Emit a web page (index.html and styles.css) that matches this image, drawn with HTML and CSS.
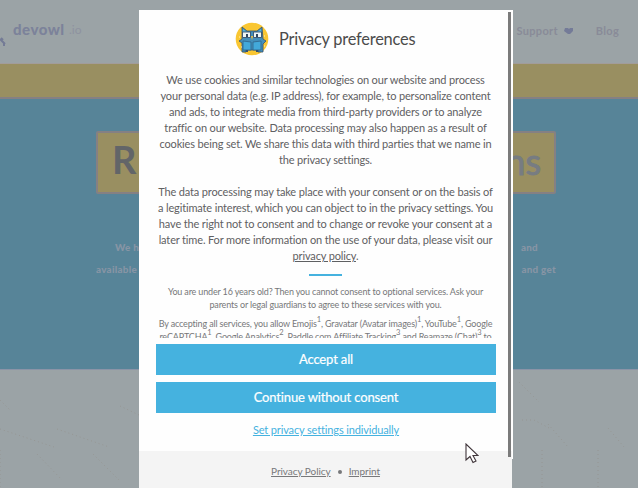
FILE: index.html
```html
<!DOCTYPE html>
<html lang="en">
<head>
<meta charset="utf-8">
<title>Privacy preferences</title>
<link rel="stylesheet" href="styles.css">
</head>
<body>
<div class="site">
  <header class="site-header">
    <div class="brand"><svg class="brand-mark" viewBox="0 0 6 10"><path d="M0 2L5 7M1 1l2 2M4 6v3" /></svg><b>devowl</b><span>.io</span></div>
    <nav class="site-nav"><span>Support</span><svg class="caret" viewBox="0 0 10 6"><path d="M1 0h3l1 1 1-1h3v3L6 6H4L0 3z"/></svg><span>Blog</span></nav>
  </header>
  <div class="notice"></div>
  <section class="hero">
    <div class="hero-title"><span>R</span><span class="hero-end">ns</span></div>
    <div class="hero-line first"><span>We h</span><span>and</span></div>
    <div class="hero-line"><span>available</span><span>and get</span></div>
  </section>
  <section class="below">
    <svg class="traces" viewBox="0 0 638 118"><path d="M0 30l11 11M0 59l54 18M37 84l25 26M57 59l52 18M93 84l26 26M120 36l19 9M519 12l20 20M548 54l20 23M608 58l16 19M522 50h12l15 8M542 80v38M598 80v38M0 80v38" /></svg>
  </section>
</div>

<div class="dialog">
  <div class="dialog-head">
    <svg class="logo" viewBox="0 0 34 34">
      <circle cx="17" cy="17" r="16.3" fill="#f9c632"/>
      <path d="M7 5l5 4h10l5-4 1 12 3 2-3 3v8h-5v-2H11v2H7v-9l-3-2 3-2z" fill="#438fba" stroke="#35516d" stroke-width=".8"/>
      <path d="M8 7l5 4-5 1zM26 7l-5 4 5 1z" fill="#55b6df"/>
      <path d="M7.5 10h8v5.5h-8zM18.5 10h8v5.5h-8z" fill="#edf5f6" stroke="#35516d" stroke-width=".9"/>
      <path d="M11 12h2v3h-2zM21 12h2v3h-2z" fill="#304862"/>
      <path d="M16 14h2l-1 4z" fill="#f6c23a"/>
      <path d="M8 19l8 1v8H8zM18 20l8-1v9h-8z" fill="#43a9da" stroke="#31698f" stroke-width=".9"/>
      <path d="M12 28v2M22 28v2" stroke="#35516d" stroke-width="2"/>
      <path d="M4 15h1M29 14h1M29 24h1M6 25h1" stroke="#fff3c4"/>
    </svg>
    <h1>Privacy preferences</h1>
  </div>
  <div class="content">
    <p>We use cookies and similar technologies on our website and process<br>your personal data (e.g. IP address), for example, to personalize content<br>and ads, to integrate media from third-party providers or to analyze<br>traffic on our website. Data processing may also happen as a result of<br>cookies being set. We share this data with third parties that we name in<br>the privacy settings.</p>
    <p>The data processing may take place with your consent or on the basis of<br>a legitimate interest, which you can object to in the privacy settings. You<br>have the right not to consent and to change or revoke your consent at a<br>later time. For more information on the use of your data, please visit our<br><a>privacy policy</a>.</p>
    <div class="rule"></div>
    <div class="small">You are under 16 years old? Then you cannot consent to optional services. Ask your<br>parents or legal guardians to agree to these services with you.</div>
    <div class="small services">By accepting all services, you allow Emojis<sup>1</sup>, Gravatar (Avatar images)<sup>1</sup>, YouTube<sup>1</sup>, Google<br>reCAPTCHA<sup>1</sup>, Google Analytics<sup>2</sup>, Paddle.com Affiliate Tracking<sup>3</sup> and Reamaze (Chat)<sup>3</sup> to</div>
  </div>
  <div class="actions">
    <div class="button">Accept all</div>
    <div class="button">Continue without consent</div>
    <a class="individual">Set privacy settings individually</a>
  </div>
  <footer class="dialog-foot"><a>Privacy Policy</a><i></i><a>Imprint</a></footer>
  <div class="scroll-track"><div class="scroll-thumb"></div></div>
</div>
<svg class="cursor" viewBox="0 0 14 21"><path d="M1 1v16l4-3.5 3 6 3-1.5-3-5.5h5z" fill="#fff" stroke="#40363b" stroke-width="1.1"/></svg>
</body>
</html>
```
FILE: styles.css
```css
* { box-sizing: border-box; }
body { margin: 0; width: 638px; height: 488px; overflow: hidden; font-family: Lato, "Liberation Sans", sans-serif; background: #9ba3a6; }
.site { width: 638px; height: 488px; }
.site-header { height: 64px; display: flex; justify-content: space-between; padding: 21px 19px 0 0; border-bottom: 1px solid #a29c9a; font-size: 11px; line-height: 17px; color: #898b98; }
.brand { display: flex; color: #7c829a; }
.brand-mark { width: 6px; height: 10px; margin: 16px 7px 0 0; fill: none; stroke: #747b96; stroke-width: 2; }
.brand b { font-size: 15px; font-weight: 900; width: 56px; letter-spacing: .5px; }
.brand span { color: #8e92a0; font-size: 12px; }
.site-nav { display: flex; align-items: center; height: 19px; font-weight: 700; font-size: 11px; letter-spacing: .3px; }
.caret { width: 10px; height: 6px; margin: 0 22px 0 6px; fill: #747b98; }
.notice { height: 35px; background: #998f61; border-bottom: 2px solid #858083; }
.hero { height: 271px; background: #578498; border-bottom: 1px solid #8b94a7; padding: 32px 82px 0 96px; }
.hero-title { height: 63px; display: flex; justify-content: space-between; align-items: center; background: #998f61; border: 2px solid #858083; border-radius: 2px; padding: 0 13px 8px 14px; font-size: 38px; line-height: 52px; font-weight: 700; color: #626568; }
.hero-end { padding-top: 4px; font-size: 36px; font-weight: 400; color: #777c82; -webkit-text-stroke: 1px #777c82; }
.hero-line { display: flex; justify-content: space-between; height: 22px; font-size: 9.8px; line-height: 18px; font-weight: 900; color: #8795a5; letter-spacing: .3px; }
.first { margin-top: 44px; padding: 0 18px 0 19px; }
.below { height: 118px; background: #9ba3a6; }
.traces { display: block; width: 638px; height: 118px; fill: none; stroke: #94938f; stroke-width: .8; stroke-dasharray: 1 3; }
.dialog { position: absolute; left: 139px; top: 10px; width: 373px; height: 478px; display: flex; flex-direction: column; background: #fefefe; color: #5f6062; }
.dialog-head { height: 57px; flex: none; display: flex; padding: 12px 0 0 96px; }
.logo { width: 34px; height: 34px; }
h1 { margin: 0 0 0 10px; font-size: 16.4px; line-height: 34px; font-weight: 400; color: #4b4b4b; white-space: nowrap; letter-spacing: -.22px; }
.content { height: 271px; flex: none; overflow: hidden; padding-top: 5px; text-align: center; white-space: nowrap; }
.content p { margin: 0 0 16px; font-size: 11px; line-height: 16px; letter-spacing: -.15px; }
a { text-decoration: underline; }
.content p:nth-child(2) { margin-bottom: 10px; }
.rule { width: 33px; height: 2px; margin: 0 auto 9px; background: #45b2df; }
.small { font-size: 9px; line-height: 13px; letter-spacing: -.16px; color: #77787a; }
.services { margin-top: 6px; }
sup { font-size: 7.5px; line-height: 0; vertical-align: 5px; }
.actions { height: 113px; flex: none; padding: 6px 16px 0 17px; text-align: center; }
.button { height: 31px; margin-bottom: 7px; background: #45b2df; color: #fff; font-size: 13px; line-height: 31px; letter-spacing: -.15px; -webkit-text-stroke: .2px #fff; }
.individual { display: block; font-size: 11px; line-height: 19px; letter-spacing: -.14px; color: #45b2df; }
.dialog-foot { flex: 1; display: flex; justify-content: center; padding-top: 10px; background: #f4f4f4; font-size: 10px; line-height: 20px; letter-spacing: -.05px; color: #77787a; }
.dialog-foot i { width: 4px; height: 4px; margin: 9px 7px; border-radius: 50%; background: #77787a; }
.scroll-track { position: absolute; right: -1px; top: 0; width: 6px; height: 449px; background: linear-gradient(90deg, transparent 5px, #fff 5px); padding: 2px 1px; }
.scroll-thumb { width: 3px; height: 445px; background: #7b7b7b; }
.cursor { position: absolute; left: 465px; top: 443px; width: 14px; height: 21px; }
```
